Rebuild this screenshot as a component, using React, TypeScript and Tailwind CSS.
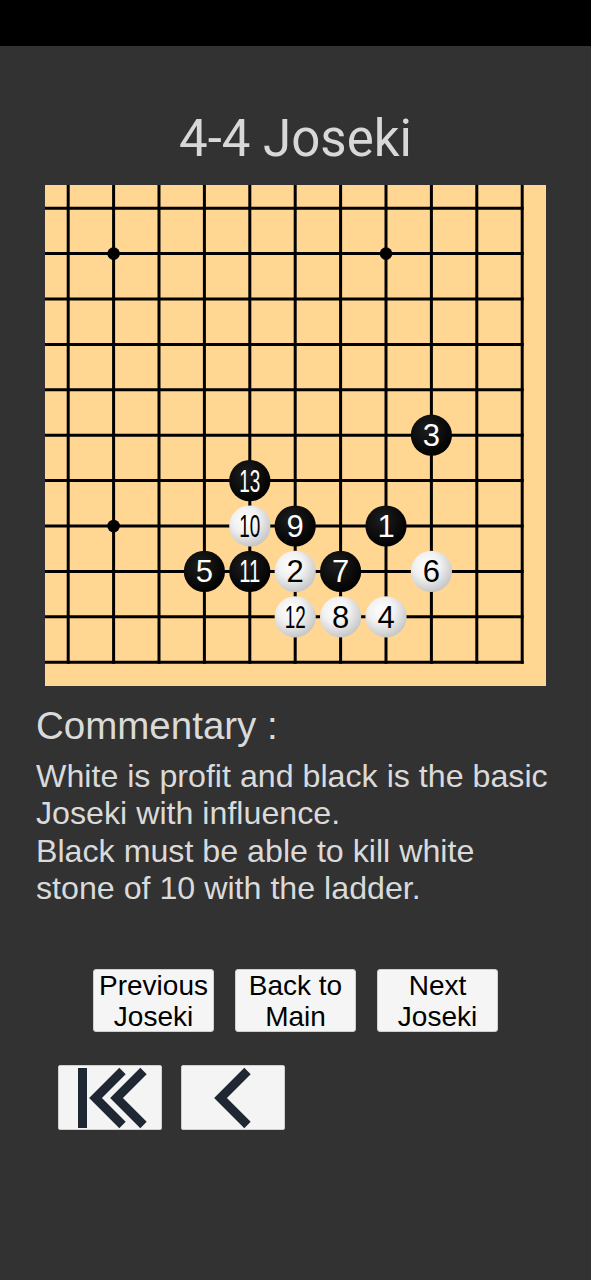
import React from "react";

type Stone = { i: number; j: number; n: number; c: "b" | "w" };

const STONES: Stone[] = [
  { i: 7, j: 7, n: 1, c: "b" },
  { i: 5, j: 8, n: 2, c: "w" },
  { i: 8, j: 5, n: 3, c: "b" },
  { i: 7, j: 9, n: 4, c: "w" },
  { i: 3, j: 8, n: 5, c: "b" },
  { i: 8, j: 8, n: 6, c: "w" },
  { i: 6, j: 8, n: 7, c: "b" },
  { i: 6, j: 9, n: 8, c: "w" },
  { i: 5, j: 7, n: 9, c: "b" },
  { i: 4, j: 7, n: 10, c: "w" },
  { i: 4, j: 8, n: 11, c: "b" },
  { i: 5, j: 9, n: 12, c: "w" },
  { i: 4, j: 6, n: 13, c: "b" },
];

const p = (k: number) => 23.2 + 45.4 * k;

function Board() {
  const idx = Array.from({ length: 11 }, (_, k) => k);
  const end = p(10) + 1.5;
  return (
    <svg width={501} height={501} viewBox="0 0 501 501" className="block">
      <defs>
        <radialGradient id="wg" cx="0.4" cy="0.35" r="0.7">
          <stop offset="0" stopColor="#ffffff" />
          <stop offset="0.45" stopColor="#f1f1f1" />
          <stop offset="1" stopColor="#c2c2c2" />
        </radialGradient>
        <radialGradient id="bg" cx="0.4" cy="0.35" r="0.7">
          <stop offset="0" stopColor="#1e1e1e" />
          <stop offset="1" stopColor="#000000" />
        </radialGradient>
      </defs>
      <rect x={0} y={0} width={501} height={501} fill="#ffd692" />
      {idx.map((k) => (
        <line key={"v" + k} x1={p(k)} y1={0} x2={p(k)} y2={end} stroke="#000" strokeWidth={3} />
      ))}
      {idx.map((k) => (
        <line key={"h" + k} x1={0} y1={p(k)} x2={end} y2={p(k)} stroke="#000" strokeWidth={3} />
      ))}
      {[
        [1, 1],
        [7, 1],
        [1, 7],
        [7, 7],
      ].map(([a, b]) => (
        <circle key={a + "-" + b} cx={p(a)} cy={p(b)} r={6.3} fill="#000" />
      ))}
      {STONES.map((s) => {
        const cx = p(s.i);
        const cy = p(s.j);
        const two = s.n >= 10;
        return (
          <g key={s.n}>
            <circle cx={cx} cy={cy} r={20.6} fill={s.c === "b" ? "url(#bg)" : "url(#wg)"} />
            <text
              x={cx}
              y={cy + 11}
              textAnchor="middle"
              fontFamily="'Liberation Sans', Arial, sans-serif"
              fontSize={31}
              fill={s.c === "b" ? "#ffffff" : "#000000"}
              {...(two ? { textLength: 21, lengthAdjust: "spacingAndGlyphs" } : {})}
            >
              {s.n}
            </text>
          </g>
        );
      })}
    </svg>
  );
}

function Chevron({ x }: { x: number }) {
  return (
    <polyline
      points={`${x + 27},6 ${x},33 ${x + 27},60`}
      fill="none"
      stroke="#1f2733"
      strokeWidth={9}
      strokeLinecap="butt"
      strokeLinejoin="miter"
    />
  );
}

export default function App() {
  return (
    <div className="w-[591px] h-[1280px] bg-[#323232] overflow-hidden">
      <div className="h-[46px] bg-black" />
      <h1
        className="mt-[63px] text-center text-[51px] leading-[60px] text-[#d8d8d8]"
        style={{ fontFamily: "Roboto, 'Liberation Sans', sans-serif" }}
      >
        4-4 Joseki
      </h1>
      <div className="mt-[16px] ml-[45px] w-[501px] h-[501px]">
        <Board />
      </div>
      <div
        className="ml-[36px] text-[#dadada]"
        style={{ fontFamily: "'Liberation Sans', Arial, sans-serif" }}
      >
        <div className="mt-[18px] text-[38.5px] leading-[44px] whitespace-nowrap">Commentary :</div>
        <div className="mt-[10px] text-[32.2px] leading-[37.3px] whitespace-nowrap">
          <div>White is profit and black is the basic</div>
          <div>Joseki with influence.</div>
          <div>Black must be able to kill white</div>
          <div>stone of 10 with the ladder.</div>
        </div>
      </div>
      <div
        className="mt-[62px] flex justify-center gap-[21px] text-black text-[28px] leading-[31px]"
        style={{ fontFamily: "'Liberation Sans', Arial, sans-serif" }}
      >
        {[
          ["Previous", "Joseki"],
          ["Back to", "Main"],
          ["Next", "Joseki"],
        ].map(([a, b]) => (
          <div
            key={a}
            className="w-[121px] h-[63px] bg-[#f5f5f5] border border-[#d0d0d0] rounded-[3px] flex flex-col items-center justify-center text-center"
          >
            <span>{a}</span>
            <span>{b}</span>
          </div>
        ))}
      </div>
      <div className="mt-[33px] pl-[58px] flex gap-[19px]">
        <div className="w-[104px] h-[65px] bg-[#f4f4f4] border border-[#d0d0d0] rounded-[2px]">
          <svg width={104} height={65} viewBox="0 0 104 65" className="block -m-px">
            <rect x={20} y={3} width={9} height={60} fill="#1f2733" />
            <Chevron x={37.5} />
            <Chevron x={58.5} />
          </svg>
        </div>
        <div className="w-[104px] h-[65px] bg-[#f4f4f4] border border-[#d0d0d0] rounded-[2px]">
          <svg width={104} height={65} viewBox="0 0 104 65" className="block -m-px">
            <Chevron x={39.5} />
          </svg>
        </div>
      </div>
    </div>
  );
}
